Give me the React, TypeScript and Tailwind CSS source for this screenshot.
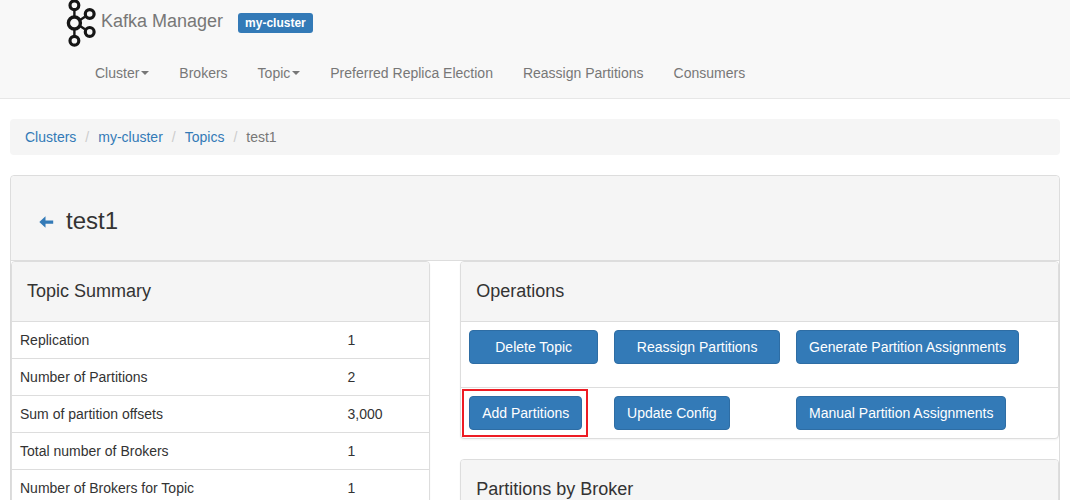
import React from "react";

const navItems = [
  { label: "Cluster", caret: true },
  { label: "Brokers", caret: false },
  { label: "Topic", caret: true },
  { label: "Preferred Replica Election", caret: false },
  { label: "Reassign Partitions", caret: false },
  { label: "Consumers", caret: false },
];

const crumbs = ["Clusters", "my-cluster", "Topics"];

const summary = [
  ["Replication", "1"],
  ["Number of Partitions", "2"],
  ["Sum of partition offsets", "3,000"],
  ["Total number of Brokers", "1"],
  ["Number of Brokers for Topic", "1"],
];

function KafkaLogo() {
  return (
    <svg width="32" height="48" viewBox="0 0 32 48" fill="none" stroke="#161616" aria-hidden="true">
      <path d="M8.400 9v8M8.400 29v7M14 20l5-3.200M14 26l5 3.200" strokeWidth="2.400" />
      <circle cx="8.400" cy="5.300" r="4.400" strokeWidth="3.200" />
      <circle cx="8.400" cy="23" r="6" strokeWidth="3.400" />
      <circle cx="8.400" cy="40.700" r="4.400" strokeWidth="3.200" />
      <circle cx="23.700" cy="14" r="4.400" strokeWidth="3.200" />
      <circle cx="23.700" cy="31.900" r="4.400" strokeWidth="3.200" />
    </svg>
  );
}

function Caret() {
  return <span className="ml-0.5 inline-block border-x-4 border-t-4 border-x-transparent border-t-[#777]" />;
}

function Panel({ title, children }: { title: string; children?: React.ReactNode }) {
  return (
    <section className="overflow-hidden rounded border border-[#ddd] bg-white shadow-xs">
      <h2 className="border-b border-[#ddd] bg-[#f5f5f5] px-[15px] py-5 text-lg leading-[19px]">{title}</h2>
      {children}
    </section>
  );
}

function Button({ children, block = false }: { children: string; block?: boolean }) {
  return (
    <button
      type="button"
      className={`h-[34px] cursor-pointer rounded border border-[#2e6da4] bg-[#337ab7] px-3 whitespace-nowrap text-white ${block ? "w-full" : ""}`}
    >
      {children}
    </button>
  );
}

export default function App() {
  return (
    <div className="h-screen overflow-hidden bg-white font-['Liberation_Sans',Arial,sans-serif] text-sm text-[#333]">
      <header className="border-b border-[#e7e7e7] bg-[#f8f8f8]">
        <div className="flex h-12 items-start pl-[66px]">
          <KafkaLogo />
          <a href="#home" className="ml-[3px] pt-[11px] text-lg leading-5 text-[#777]">
            Kafka Manager
          </a>
          <span className="mt-[13px] ml-[15px] rounded-[3px] bg-[#337ab7] px-[7px] text-xs leading-5 font-bold text-white">
            my-cluster
          </span>
        </div>
        <nav className="flex pl-20">
          {navItems.map((item) => (
            <a key={item.label} href="#nav" className="flex items-center p-[15px] leading-5 text-[#777]">
              {item.label}
              {item.caret && <Caret />}
            </a>
          ))}
        </nav>
      </header>

      <main className="px-2.5 pt-5">
        <nav aria-label="Breadcrumb" className="mb-5 rounded bg-[#f5f5f5] px-[15px] py-2">
          <ol className="flex leading-5">
            {crumbs.map((c) => (
              <li key={c} className="flex">
                <a href="#crumb" className="text-[#337ab7]">
                  {c}
                </a>
                <span className="px-[9px] text-[#ccc]">/</span>
              </li>
            ))}
            <li className="text-[#777]">test1</li>
          </ol>
        </nav>

        <div className="rounded border border-[#ddd]">
          <div className="flex items-center gap-3 rounded-t border-b border-[#ddd] bg-[#f5f5f5] pt-[31px] pb-[25px] pl-7">
            <a href="#back" aria-label="Back">
              <svg width="15" height="12" viewBox="0 0 15 12" fill="#337ab7" className="mt-0.5">
                <path d="M.3 6L6.500 .3V4.500H14.200V7.700H6.500V11.700Z" />
              </svg>
            </a>
            <h1 className="text-2xl leading-7">test1</h1>
          </div>

          <div className="grid grid-cols-12 items-start gap-x-[30px]">
            <div className="col-span-5">
              <Panel title="Topic Summary">
                <table className="w-full table-fixed border-collapse text-left leading-5">
                  <colgroup>
                    <col className="w-[78.5%]" />
                    <col />
                  </colgroup>
                  <tbody>
                    {summary.map(([k, v]) => (
                      <tr key={k} className="border-t border-[#ddd] first:border-t-0">
                        <th scope="row" className="p-2 font-normal">
                          {k}
                        </th>
                        <td className="p-2">{v}</td>
                      </tr>
                    ))}
                  </tbody>
                </table>
              </Panel>
            </div>

            <div className="col-span-7 flex flex-col gap-5">
              <Panel title="Operations">
                <div className="grid grid-cols-[145fr_182fr_270fr]">
                  <div className="px-2 pt-2 pb-[23px]">
                    <Button block>Delete Topic</Button>
                  </div>
                  <div className="px-2 pt-2 pb-[23px]">
                    <Button block>Reassign Partitions</Button>
                  </div>
                  <div className="px-2 pt-2 pb-[23px]">
                    <Button>Generate Partition Assignments</Button>
                  </div>
                  <div className="border-t border-[#ddd] p-2">
                    <div className="relative inline-block">
                      <Button>Add Partitions</Button>
                      <span className="pointer-events-none absolute -inset-[7px] -right-1.5 border-2 border-[#ed1c24]" />
                    </div>
                  </div>
                  <div className="border-t border-[#ddd] p-2">
                    <Button>Update Config</Button>
                  </div>
                  <div className="border-t border-[#ddd] p-2">
                    <Button>Manual Partition Assignments</Button>
                  </div>
                </div>
              </Panel>
              <Panel title="Partitions by Broker" />
            </div>
          </div>
        </div>
      </main>
    </div>
  );
}
